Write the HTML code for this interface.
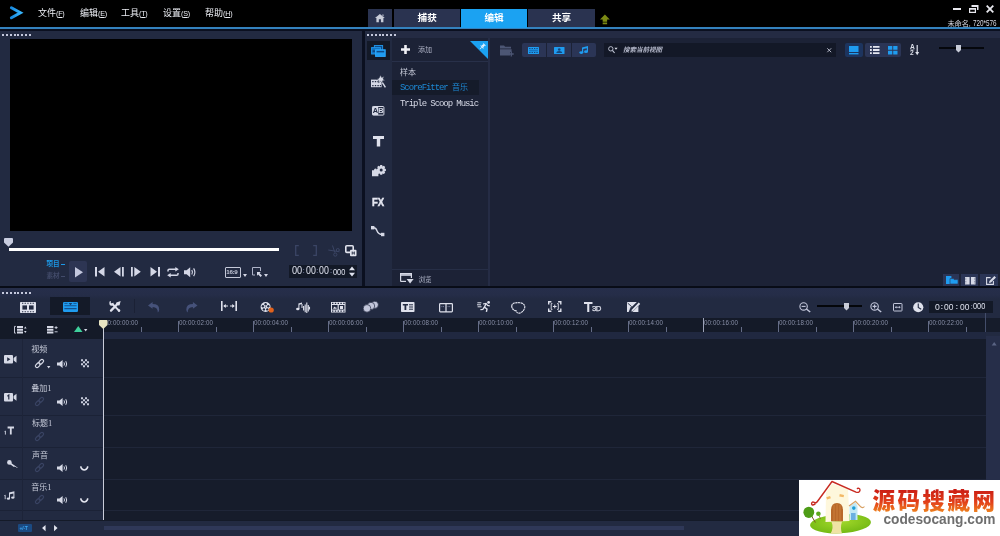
<!DOCTYPE html>
<html lang="zh-CN">
<head>
<meta charset="utf-8">
<title>VideoStudio</title>
<style>
html,body{margin:0;padding:0;background:#000;}
body{width:1000px;height:536px;position:relative;overflow:hidden;font-family:"Liberation Sans","Noto Sans CJK SC",sans-serif;color:#d0d4e4;}
.a{position:absolute;}
.t{position:absolute;white-space:nowrap;line-height:1;}
svg{position:absolute;overflow:visible;}
/* ---------- top bar ---------- */
#top{left:0;top:0;width:1000px;height:27px;background:#000;}
#bline{left:0;top:26.6px;width:1000px;height:2.4px;background:#3482be;}
#gap1{left:0;top:29px;width:1000px;height:1.5px;background:#0b1020;}
.menu{top:9.2px;font-size:9px;color:#eceef4;}
.menu small{font-size:7.2px;letter-spacing:-0.25px;position:relative;top:-0.6px}
.menu u{text-decoration-thickness:0.7px;text-underline-offset:1px}
.tab{top:9.3px;height:17.5px;background:#2a3350;color:#fff;font-size:9.6px;font-weight:bold;text-align:center;line-height:17.5px;}
/* ---------- panels ---------- */
#pv{left:0;top:30.5px;width:362.3px;height:255.5px;background:#222a41;}
#pvgap{left:362.3px;top:30.5px;width:2.7px;height:255.5px;background:#0b1020;}
#lib{left:365px;top:30.5px;width:635px;height:255.5px;background:linear-gradient(#242b43 0,#242b43 7.5px,#1c2236 7.5px);}
#libicons{left:365px;top:30.5px;width:27px;height:255.5px;background:#222a41;}
#liblist{left:392px;top:38px;width:96px;height:248px;background:#1c2236;}
#libdiv{left:488px;top:38px;width:1.5px;height:248px;background:#252c45;}
#hgap{left:0;top:285.8px;width:1000px;height:2.1px;background:#080c17;}
#tl{left:0;top:287.8px;width:1000px;height:248.2px;background:linear-gradient(#262e4a 0,#252d48 7px,#222a41 11px);}
.dots{height:2px;width:30px;background:repeating-linear-gradient(90deg,#c4c8dc 0,#c4c8dc 2px,transparent 2px,transparent 3.86px);}
.mono{font-family:"Liberation Mono","Noto Sans Mono CJK SC","Noto Sans CJK SC",monospace;}
#tc1 i,.tc i{font-style:normal;display:inline-block;width:3px;text-align:center}
.rl{font-size:7px;color:#878ea6;letter-spacing:0px;transform:scaleX(0.885);transform-origin:0 0}
.rl i{font-style:normal;display:inline-block;width:2.4px;text-align:center}
.th{font-size:8px;color:#c6cad8}
.dg{transform-origin:0 0}
</style>
</head>
<body>
<div id="root" style="position:absolute;left:0;top:0;width:1000px;height:536px;will-change:transform">
<!-- top bar -->
<div class="a" id="top"></div>
<div class="a" id="bline"></div>
<div class="a" id="gap1"></div>

<!-- panels -->
<div class="a" id="pv"></div>
<div class="a" id="pvgap"></div>
<div class="a" id="lib"></div>
<div class="a" id="libicons"></div>
<div class="a" id="liblist"></div>
<div class="a" id="libdiv"></div>
<div class="a" id="hgap"></div>
<div class="a" id="tl"></div>


<svg style="left:9px;top:5px" width="15" height="15" viewBox="0 0 15 15"><defs><linearGradient id="lg" x1="0" y1="0" x2="1" y2="0"><stop offset="0" stop-color="#188ae0"/><stop offset="1" stop-color="#36b4fc"/></linearGradient></defs><path d="M2.4 2.7 L11.4 7.7 L2.4 12.7" fill="none" stroke="url(#lg)" stroke-width="3" stroke-linejoin="miter" stroke-linecap="round"/></svg>
<div class="t menu" style="left:38px">文件<small>(<u>F</u>)</small></div>
<div class="t menu" style="left:80px">编辑<small>(<u>E</u>)</small></div>
<div class="t menu" style="left:121px">工具<small>(<u>T</u>)</small></div>
<div class="t menu" style="left:163px">设置<small>(<u>S</u>)</small></div>
<div class="t menu" style="left:205px">帮助<small>(<u>H</u>)</small></div>
<div class="a tab" style="left:367.5px;width:24.5px"></div>
<svg style="left:374.6px;top:14px" width="9.8" height="8.2" viewBox="0 0 12 10"><path d="M6 0 L12 5 L10.3 5 L10.3 10 L7.3 10 L7.3 6.5 L4.7 6.5 L4.7 10 L1.7 10 L1.7 5 L0 5 Z" fill="#c8ccd8"/><path d="M9 0.6 h1.4 v2.4 l-1.4 -1.2z" fill="#c8ccd8"/></svg>
<div class="a tab" style="left:394px;width:66.4px">捕获</div>
<div class="a tab" style="left:461px;width:66px;height:19.2px;background:#1ba2f2">编辑</div>
<div class="a tab" style="left:528.3px;width:66.5px">共享</div>
<svg style="left:600.3px;top:13.6px" width="9.8" height="10.8" viewBox="0 0 11 11"><path d="M5.5 0 L11 5.5 L8 5.5 L8 8 L3 8 L3 5.5 L0 5.5 Z M3 9 H8 V11 H3 Z" fill="#7c8a14"/></svg>
<!-- window controls -->
<div class="a" style="left:953px;top:8px;width:8px;height:2px;background:#e8e8ee"></div>
<svg style="left:969px;top:5px" width="10" height="8" viewBox="0 0 10 8"><path d="M2.5 0 H9.5 V5 H8 V2 H2.5 Z" fill="#e8e8ee"/><path d="M0 3 H7 V8 H0 Z M1.2 4.8 V6.8 H5.8 V4.8 Z" fill="#e8e8ee" fill-rule="evenodd"/></svg>
<svg style="left:986px;top:5px" width="8" height="8" viewBox="0 0 8 8"><path d="M0.7 0.7 L7.3 7.3 M7.3 0.7 L0.7 7.3" stroke="#e8e8ee" stroke-width="1.8"/></svg>
<div class="t" style="left:947.5px;top:19px;font-size:7.2px;color:#d8dae4;letter-spacing:-0.1px">未命名,<span style="display:inline-block;margin-left:2px;font-size:8.8px;letter-spacing:0;transform:scaleX(0.72);transform-origin:0 50%">720*576</span></div>


<div class="a dots" style="left:2px;top:33.5px"></div>
<div class="a" style="left:10px;top:39px;width:342px;height:192px;background:#000"></div>
<!-- scrubber -->
<svg style="left:4px;top:238px" width="9" height="9" viewBox="0 0 9 9"><path d="M1 0 H8 Q9 0 9 1 V4.5 L4.5 8.8 L0 4.5 V1 Q0 0 1 0 Z" fill="#c9cde0"/></svg>
<div class="a" style="left:9px;top:247.5px;width:269.5px;height:3px;background:#fff"></div>
<!-- project / clip -->
<div class="t" style="left:46.5px;top:261px;font-size:6.6px;color:#1c98e6;font-weight:bold">项目</div>
<div class="a" style="left:60.8px;top:264px;width:4.6px;height:1.3px;background:#1c98e6"></div>
<div class="t" style="left:46.5px;top:273px;font-size:6.6px;color:#424b6a;font-weight:bold">素材</div>
<div class="a" style="left:60.8px;top:276px;width:4.6px;height:1.3px;background:#424b6a"></div>
<div class="a" style="left:69px;top:261px;width:18px;height:20.5px;background:#2d3553;border-radius:2px"></div>
<svg style="left:74.5px;top:266.5px" width="8" height="10.5" viewBox="0 0 8 10.5"><path d="M0 0 L8 5.25 L0 10.5 Z" fill="#c4c8de"/></svg>
<!-- prev -->
<svg style="left:94.5px;top:267px" width="10" height="9.5" viewBox="0 0 10 9.5"><path d="M0 0 H2 V9.5 H0 Z M9.5 0 V9.5 L3 4.75 Z" fill="#d4d7e6"/></svg>
<!-- step back -->
<svg style="left:114px;top:267px" width="10" height="9.5" viewBox="0 0 10 9.5"><path d="M6.5 0 V9.5 L0 4.75 Z M8 0 H9.8 V9.5 H8 Z" fill="#d4d7e6"/></svg>
<!-- step fwd -->
<svg style="left:130.5px;top:267px" width="10" height="9.5" viewBox="0 0 10 9.5"><path d="M0 0 H1.8 V9.5 H0 Z M3.3 0 L9.8 4.75 L3.3 9.5 Z" fill="#d4d7e6"/></svg>
<!-- next -->
<svg style="left:149.5px;top:267px" width="10" height="9.5" viewBox="0 0 10 9.5"><path d="M0.5 0 L7 4.75 L0.5 9.5 Z M8 0 H10 V9.5 H8 Z" fill="#d4d7e6"/></svg>
<!-- loop -->
<svg style="left:166.5px;top:266.5px" width="12" height="10.5" viewBox="0 0 12 10.5"><path d="M1 4.6 V3.6 Q1 2.3 2.3 2.3 H9" fill="none" stroke="#d4d7e6" stroke-width="1.5"/><path d="M8.3 0 L11.8 2.3 L8.3 4.6 Z" fill="#d4d7e6"/><path d="M11 5.9 V6.9 Q11 8.2 9.7 8.2 H3" fill="none" stroke="#d4d7e6" stroke-width="1.5"/><path d="M3.7 5.9 L0.2 8.2 L3.7 10.5 Z" fill="#d4d7e6"/></svg>
<!-- volume -->
<svg style="left:184px;top:266.5px" width="13" height="10.5" viewBox="0 0 13 10.5"><path d="M0 3.3 H2.6 L6.2 0.3 V10.2 L2.6 7.2 H0 Z" fill="#d4d7e6"/><path d="M7.8 3 Q9.2 5.25 7.8 7.5 M9.6 1.3 Q12.2 5.25 9.6 9.2" fill="none" stroke="#d4d7e6" stroke-width="1.2"/></svg>
<!-- 16:9 -->
<div class="a" style="left:224.5px;top:267px;width:14.5px;height:8.5px;border:1px solid #c4c8d8;border-radius:1px"></div>
<div class="t" style="left:226.3px;top:269.2px;font-size:6.2px;font-weight:bold;color:#c4c8d8;letter-spacing:-0.35px">16:9</div>
<svg style="left:242.5px;top:273.5px" width="4" height="3" viewBox="0 0 4 3"><path d="M0 0 H4 L2 3 Z" fill="#d4d7e6"/></svg>
<!-- resize -->
<svg style="left:252px;top:267px" width="11" height="10.5" viewBox="0 0 11 10.5"><path d="M0.5 8 V0.5 H8.5 V4" fill="none" stroke="#aeb3c8" stroke-width="1"/><path d="M0.5 8 H3" fill="none" stroke="#aeb3c8" stroke-width="1"/><path d="M5 5 H8.8 L7.6 6.2 L10 8.6 L8.6 10 L6.2 7.6 L5 8.8 Z" fill="#d4d7e6"/></svg>
<svg style="left:264px;top:273.5px" width="4" height="3" viewBox="0 0 4 3"><path d="M0 0 H4 L2 3 Z" fill="#d4d7e6"/></svg>
<!-- mark in/out, cut, copy -->
<svg style="left:294.5px;top:245px" width="4" height="11" viewBox="0 0 4 11"><path d="M3.8 0.6 H0.7 V10.4 H3.8" fill="none" stroke="#3b4565" stroke-width="1.3"/></svg>
<svg style="left:313px;top:245px" width="4" height="11" viewBox="0 0 4 11"><path d="M0.2 0.6 H3.3 V10.4 H0.2" fill="none" stroke="#3b4565" stroke-width="1.3"/></svg>
<svg style="left:328px;top:244.5px" width="12" height="12" viewBox="0 0 12 12"><path d="M4.5 0.5 L6.8 7.5 M0.3 5 L11.5 6.8" fill="none" stroke="#3b4565" stroke-width="1"/><circle cx="7.3" cy="9.6" r="1.6" fill="none" stroke="#3b4565" stroke-width="1"/><circle cx="9.8" cy="5" r="1.5" fill="none" stroke="#3b4565" stroke-width="1"/></svg>
<svg style="left:345px;top:245px" width="12" height="11.5" viewBox="0 0 12 11.5"><rect x="0.8" y="0.8" width="7.4" height="6.6" rx="1" fill="none" stroke="#e2e4ee" stroke-width="1.6"/><rect x="5" y="4.8" width="6.5" height="6.4" rx="1" fill="#e2e4ee"/><path d="M7.2 6.5 V9.6 M9.3 6.5 V9.6 M7.2 8 H9.3" stroke="#222a41" stroke-width="0.9" fill="none"/></svg>
<!-- timecode -->
<div class="a" style="left:289px;top:264.5px;width:67.5px;height:13.5px;background:#131927"></div>
<div class="t dg" style="left:291.8px;top:264.2px;font-size:11.6px;color:#dfe2ee;transform:scaleX(0.791)">00</div>
<div class="t" style="left:302.3px;top:267.4px;font-size:8.0px;color:#59617e;font-weight:bold">:</div>
<div class="t dg" style="left:306.0px;top:264.2px;font-size:11.6px;color:#dfe2ee;transform:scaleX(0.760)">00</div>
<div class="t" style="left:316.0px;top:267.4px;font-size:8.0px;color:#59617e;font-weight:bold">:</div>
<div class="t dg" style="left:319.4px;top:264.2px;font-size:11.6px;color:#dfe2ee;transform:scaleX(0.760)">00</div>
<div class="t" style="left:329.7px;top:267.4px;font-size:8.0px;color:#59617e;font-weight:bold">:</div>
<div class="t dg" style="left:333.0px;top:266.6px;font-size:9.4px;color:#dfe2ee;transform:scaleX(0.791)">000</div>
<svg style="left:349px;top:266px" width="6" height="11" viewBox="0 0 6 11"><path d="M0 4.3 L3 0.5 L6 4.3 Z M0 6.7 L3 10.5 L6 6.7 Z" fill="#dfe2ee"/></svg>


<div class="a dots" style="left:367px;top:33.5px"></div>
<!-- left icon column -->
<div class="a" style="left:367px;top:41px;width:22.5px;height:18.5px;background:#131927"></div>
<svg style="left:370.5px;top:44.5px" width="15" height="12" viewBox="0 0 15 12"><rect x="3.4" y="0.5" width="8.2" height="5" fill="#0f4a86" stroke="#1f8fe0" stroke-width="1"/><rect x="0.6" y="2.6" width="8.8" height="6.4" fill="#1272c0" stroke="#1f96ea" stroke-width="1"/><rect x="1.6" y="5.4" width="2.4" height="1.4" fill="#0f3f74"/><rect x="4.6" y="4.8" width="9.6" height="6.6" fill="#1f9cf0" stroke="#2aa6fa" stroke-width="1"/><rect x="5.6" y="5.9" width="7.6" height="1.5" fill="#0f4a86"/></svg>
<!-- instant project -->
<svg style="left:371px;top:74.5px" width="15" height="13" viewBox="0 0 15 13"><rect x="0" y="4.6" width="10.6" height="7.6" fill="#d6d9e6"/><path d="M1.2 6 h1.4 v1.2 h-1.4z M3.8 6 h1.4 v1.2 h-1.4z M6.4 6 h1.4 v1.2 h-1.4z M1.2 10 h1.4 v1.2 h-1.4z M3.8 10 h1.4 v1.2 h-1.4z M6.4 10 h1.4 v1.2 h-1.4z M8.8 10 h1.2 v1.2 h-1.2z" fill="#222a41"/><path d="M9.6 0 L10.6 2.4 L13.2 1.6 L12 4 L14.2 5.4 L11.6 5.8 L11.6 8.2 L9.6 6.4 L7.4 7.8 L7.8 5.2 L5.4 4.2 L8 3.2 Z" fill="#d6d9e6" stroke="#222a41" stroke-width="0.5"/><path d="M11.4 7.6 L14.4 12.4" stroke="#d6d9e6" stroke-width="1.4"/></svg>
<!-- AB -->
<svg style="left:371.5px;top:105.5px" width="12.4" height="9.6" viewBox="0 0 12.4 9.6"><rect x="0.5" y="0.5" width="11.4" height="8.6" rx="0.8" fill="#222a41" stroke="#d6d9e6" stroke-width="1"/><rect x="0.5" y="0.5" width="5.7" height="8.6" fill="#d6d9e6"/><text x="3.35" y="7.4" text-anchor="middle" font-family="'Liberation Sans',sans-serif" font-weight="bold" font-size="7.4" fill="#222a41">A</text><text x="9" y="7.4" text-anchor="middle" font-family="'Liberation Sans',sans-serif" font-weight="bold" font-size="7.4" fill="#d6d9e6">B</text></svg>
<!-- T -->
<svg style="left:372.5px;top:136px" width="11" height="10.5" viewBox="0 0 11 10.5"><path d="M0 0 H11 V3 H7.2 V10.5 H3.8 V3 H0 Z" fill="#dfe1ec"/></svg>
<!-- graphic gear -->
<svg style="left:372px;top:165px" width="14" height="11.5" viewBox="0 0 14 11.5"><path d="M0 5.2 H2 Q2 3.6 3.4 3.6 Q4.8 3.6 4.8 5.2 H6.4 V11.3 H0 Z" fill="#d6d9e6"/><g transform="translate(9.2 4.9)"><path d="M-1 -4.8 H1 L1.3 -3.5 L2.6 -4.2 L4 -2.8 L3.3 -1.4 L4.7 -1 V1 L3.3 1.4 L4 2.8 L2.6 4.2 L1.3 3.5 L1 4.8 H-1 L-1.3 3.5 L-2.6 4.2 L-4 2.8 L-3.3 1.4 L-4.7 1 V-1 L-3.3 -1.4 L-4 -2.8 L-2.6 -4.2 L-1.3 -3.5 Z" fill="#d6d9e6"/><circle r="1.5" fill="#222a41"/></g></svg>
<!-- FX -->
<div class="t" style="left:371.5px;top:195.8px;font-size:11.6px;font-weight:bold;color:#e4e6f0;letter-spacing:0px;-webkit-text-stroke:0.5px #e4e6f0;transform:scaleX(0.82);transform-origin:0 0">FX</div>
<!-- path -->
<svg style="left:371.3px;top:225.5px" width="13.5" height="10.5" viewBox="0 0 13.5 10.5"><path d="M1.8 1.8 C8 0.6 3.4 8.6 11.6 8.4" fill="none" stroke="#d6d9e6" stroke-width="1.4"/><rect x="0" y="0" width="3.4" height="3.4" fill="#d6d9e6"/><rect x="10" y="6.8" width="3.4" height="3.4" fill="#d6d9e6"/></svg>
<!-- list column -->
<svg style="left:401px;top:45px" width="9" height="9" viewBox="0 0 9 9"><path d="M3.2 0 H5.8 V3.2 H9 V5.8 H5.8 V9 H3.2 V5.8 H0 V3.2 H3.2 Z" fill="#f0f1f6"/></svg>
<div class="t" style="left:418px;top:46px;font-size:7px;color:#aeb3c6">添加</div>
<svg style="left:470px;top:41px" width="18" height="18" viewBox="0 0 18 18"><path d="M0 0 H18 V18 Z" fill="#1ba2f2"/><g transform="translate(12.6 5.4) rotate(45) scale(0.72)"><rect x="-2.2" y="-4" width="4.4" height="1.4" fill="#e8f4ff"/><rect x="-1.5" y="-2.6" width="3" height="3" fill="#e8f4ff"/><rect x="-2.8" y="0.4" width="5.6" height="1.3" fill="#e8f4ff"/><rect x="-0.5" y="1.7" width="1" height="3.4" fill="#e8f4ff"/></g></svg>
<div class="a" style="left:392px;top:61px;width:96px;height:1px;background:#283049"></div>
<div class="t" style="left:400px;top:69px;font-size:8px;color:#c6cad8">样本</div>
<div class="a" style="left:392px;top:80px;width:87px;height:14.5px;background:#151b2a"></div>
<div class="t mono" style="left:400px;top:84px;font-size:9px;color:#1d8ad6;letter-spacing:-1.07px">ScoreFitter <span style="letter-spacing:0;font-size:8px">音乐</span></div>
<div class="t mono" style="left:400px;top:99.5px;font-size:9px;color:#d6d9e6;letter-spacing:-1.07px">Triple Scoop Music</div>
<!-- browse -->
<div class="a" style="left:392px;top:269px;width:96px;height:1px;background:#262e46"></div>
<svg style="left:400px;top:273px" width="14" height="11" viewBox="0 0 14 11"><path d="M0.6 8.4 V0.6 H11.4 V5" fill="none" stroke="#d6d9e6" stroke-width="1.2"/><path d="M0.6 2 H11.4" stroke="#d6d9e6" stroke-width="1.6"/><path d="M0.6 8.4 H6" stroke="#d6d9e6" stroke-width="1.2"/><path d="M6.6 6 H13.6 L10.1 10.6 Z" fill="#d6d9e6"/></svg>
<div class="t" style="left:418.5px;top:276.5px;font-size:6.5px;color:#aeb3c6">浏览</div>


<!-- folder add -->
<svg style="left:499.5px;top:45px" width="14" height="11.5" viewBox="0 0 14 11.5"><path d="M0 0.4 H4 L5.2 1.8 H11 V3.4 H0 Z" fill="#4c5674"/><path d="M0 4.2 H11.6 V7 H10 V10.4 H0 Z" fill="#4c5674"/><path d="M11.3 6.6 V11.4 M8.9 9 H13.7" stroke="#4c5674" stroke-width="1.3"/></svg>
<!-- media filter buttons -->
<div class="a" style="left:522px;top:42.5px;width:24px;height:14px;background:#2b3556;border-radius:2px 0 0 2px"></div>
<div class="a" style="left:547px;top:42.5px;width:24px;height:14px;background:#2b3556"></div>
<div class="a" style="left:572px;top:42.5px;width:24px;height:14px;background:#2b3556;border-radius:0 2px 2px 0"></div>
<svg style="left:528px;top:46.5px" width="11" height="7" viewBox="0 0 11 7"><rect width="11" height="7" rx="0.6" fill="#1f9cf0"/><path d="M1.2 1 h1.3 v0.9 h-1.3z M3.6 1 h1.3 v0.9 h-1.3z M6 1 h1.3 v0.9 h-1.3z M8.4 1 h1.3 v0.9 h-1.3z M1.2 5.1 h1.3 v0.9 h-1.3z M3.6 5.1 h1.3 v0.9 h-1.3z M6 5.1 h1.3 v0.9 h-1.3z M8.4 5.1 h1.3 v0.9 h-1.3z" fill="#16467c"/><rect x="1.2" y="2.7" width="8.6" height="1.7" fill="#1676c4"/></svg>
<svg style="left:553.5px;top:46.5px" width="10.5" height="7" viewBox="0 0 10.5 7"><rect width="10.5" height="7" rx="0.6" fill="#1f9cf0"/><circle cx="5.25" cy="2.5" r="1.3" fill="#16467c"/><path d="M2.3 6 Q2.3 4 5.25 4 Q8.2 4 8.2 6 Z" fill="#16467c"/></svg>
<svg style="left:579px;top:46px" width="9.5" height="8" viewBox="0 0 9.5 8"><path d="M3 1.4 L9 0 V5.8 H7.8 V2.2 L4.2 3 V6.8 H3 Z" fill="#1f9cf0"/><ellipse cx="2.3" cy="6.6" rx="2" ry="1.4" fill="#1f9cf0"/><ellipse cx="7" cy="5.7" rx="2" ry="1.4" fill="#1f9cf0"/></svg>
<!-- search -->
<div class="a" style="left:603.5px;top:42.5px;width:232.5px;height:14px;background:#131827"></div>
<svg style="left:608px;top:46px" width="10" height="7.5" viewBox="0 0 10 7.5"><circle cx="2.8" cy="2.8" r="2.2" fill="none" stroke="#c4c8d8" stroke-width="0.9"/><path d="M4.4 4.4 L6.6 7" stroke="#c4c8d8" stroke-width="1.1"/><path d="M6.4 1.8 H9.6 L8 3.8 Z" fill="#e0e2ec"/></svg>
<div class="t" style="left:623px;top:46.5px;font-size:6.5px;font-style:italic;font-weight:bold;color:#b4b8ca">搜索当前视图</div>
<svg style="left:827px;top:47.5px" width="4.5" height="4.5" viewBox="0 0 4.5 4.5"><path d="M0.3 0.3 L4.2 4.2 M4.2 0.3 L0.3 4.2" stroke="#c4c8d8" stroke-width="0.9"/></svg>
<!-- view buttons -->
<div class="a" style="left:844.5px;top:42.5px;width:18px;height:14px;background:#1d345e;border-radius:2px"></div>
<div class="a" style="left:865px;top:42.5px;width:17.5px;height:14px;background:#2b3556;border-radius:2px 0 0 2px"></div>
<div class="a" style="left:883px;top:42.5px;width:18px;height:14px;background:#2b3556;border-radius:0 2px 2px 0"></div>
<svg style="left:849px;top:45.5px" width="9.5" height="8.5" viewBox="0 0 9.5 8.5"><rect width="9.5" height="6" fill="#1f9cf0"/><rect y="7" width="9.5" height="1.4" fill="#1f9cf0"/></svg>
<svg style="left:869.5px;top:46px" width="9.5" height="8" viewBox="0 0 9.5 8"><path d="M0 0 h1.8 v1.8 h-1.8z M0 3.1 h1.8 v1.8 h-1.8z M0 6.2 h1.8 v1.8 h-1.8z M3 0 h6.5 v1.8 h-6.5z M3 3.1 h6.5 v1.8 h-6.5z M3 6.2 h6.5 v1.8 h-6.5z" fill="#e4e6f0"/></svg>
<svg style="left:887.5px;top:45.5px" width="9.5" height="8.5" viewBox="0 0 9.5 8.5"><path d="M0 0 h4.3 v3.8 h-4.3z M5.2 0 h4.3 v3.8 h-4.3z M0 4.7 h4.3 v3.8 h-4.3z M5.2 4.7 h4.3 v3.8 h-4.3z" fill="#1f9cf0"/></svg>
<!-- sort -->
<div class="t" style="left:910px;top:44.4px;font-size:6.6px;font-weight:bold;color:#dcdfea;line-height:5.4px">A<br>2</div>
<svg style="left:910px;top:45px" width="9.5" height="10.5" viewBox="0 0 9.5 10.5"><path d="M0.2 4.9 H4.4" stroke="#dcdfea" stroke-width="0.6"/><path d="M7.2 0 V8" stroke="#dcdfea" stroke-width="1.2"/><path d="M5.2 7 H9.2 L7.2 10.3 Z" fill="#dcdfea"/></svg>
<!-- size slider -->
<div class="a" style="left:938.5px;top:47.2px;width:45.5px;height:2px;background:#05070c"></div>
<svg style="left:956px;top:44.5px" width="5" height="7.5" viewBox="0 0 5 7.5"><path d="M0 0 H5 V5 L2.5 7.5 L0 5 Z" fill="#c8ccd8"/></svg>
<!-- bottom-right panel buttons -->
<div class="a" style="left:942.5px;top:273.5px;width:16px;height:12.5px;background:#2b3556"></div>
<div class="a" style="left:961px;top:273.5px;width:16.5px;height:12.5px;background:#2b3556"></div>
<div class="a" style="left:980px;top:273.5px;width:18px;height:12.5px;background:#2b3556"></div>
<svg style="left:945.5px;top:276px" width="12" height="8" viewBox="0 0 12 8"><path d="M0 0 H5.4 V8 H0 Z" fill="#1f9cf0"/><path d="M4 2.6 H7.4 L8.2 3.6 H12 V8 H4 Z" fill="#1f9cf0" stroke="#2b3556" stroke-width="0.6"/></svg>
<svg style="left:964.5px;top:276.5px" width="10.5" height="7.5" viewBox="0 0 10.5 7.5"><path d="M0 0 H4.6 V7.5 H0 Z M5.9 0 H10.5 V7.5 H5.9 Z" fill="#d6d9e6"/><path d="M0.8 0.8 V6.7 M9.7 0.8 V6.7" stroke="#2b3556" stroke-width="0.6" stroke-dasharray="0.8 0.8"/></svg>
<svg style="left:985.5px;top:275.5px" width="10" height="9" viewBox="0 0 10 9"><path d="M4.6 1.6 H0.6 V8.4 H7.4 V5" fill="none" stroke="#d6d9e6" stroke-width="1.1"/><path d="M8.4 0 L10 1.6 L5 6.6 L3 7 L3.4 5 Z" fill="#d6d9e6"/></svg>

<div class="a dots" style="left:2px;top:292px"></div>
<svg style="left:19.5px;top:301.5px" width="16" height="11" viewBox="0 0 16 11"><rect width="16" height="11" rx="0.8" fill="#dfe1ec"/><rect x="2.4" y="3.4" width="4.6" height="4.2" fill="#222a41"/><rect x="9" y="3.4" width="4.6" height="4.2" fill="#222a41"/><path d="M2 0.7 h1.3 v1 h-1.3z M4.6 0.7 h1.3 v1 h-1.3z M7.3 0.7 h1.3 v1 h-1.3z M10 0.7 h1.3 v1 h-1.3z M12.6 0.7 h1.3 v1 h-1.3z M2 9.3 h1.3 v1 h-1.3z M4.6 9.3 h1.3 v1 h-1.3z M7.3 9.3 h1.3 v1 h-1.3z M10 9.3 h1.3 v1 h-1.3z M12.6 9.3 h1.3 v1 h-1.3z" fill="#222a41"/></svg>
<div class="a" style="left:49.5px;top:297px;width:40.5px;height:18px;background:#141a28"></div>
<svg style="left:62.5px;top:301.5px" width="15" height="10" viewBox="0 0 15 10"><rect width="15" height="10" rx="1.2" fill="#1f9cf0"/><path d="M1.4 3.8 H13.6 M1.4 6.6 H13.6" stroke="#14508c" stroke-width="1.1"/><path d="M5.6 1 H9.4 L7.5 3.2 Z" fill="#123e70"/><path d="M1.4 1.4 H4.6 M10.4 1.4 H13.6" stroke="#14508c" stroke-width="0.9"/></svg>
<svg style="left:109px;top:300.5px" width="12" height="11" viewBox="0 0 12 11"><path d="M2 9.6 L8.4 3" stroke="#dfe1ec" stroke-width="2.3" stroke-linecap="round"/><path d="M7.4 1.4 L11.6 0 L10.6 4.2 L9 4.6 L7 2.6 Z" fill="#dfe1ec"/><path d="M3.4 3 L10 9.6" stroke="#dfe1ec" stroke-width="2" stroke-linecap="round"/><path d="M0.3 2 Q0 0.2 2 0 L1.7 1.7 L3 2.8 L4.3 1.6 Q5 3.6 3.6 4.6 Q1.8 5.2 0.7 4 Z" fill="#dfe1ec"/><circle cx="10" cy="9.6" r="1.3" fill="#dfe1ec"/></svg>
<div class="a" style="left:134px;top:299px;width:1px;height:14px;background:#1b2135"></div>
<svg style="left:148px;top:301.5px" width="11.5" height="10.5" viewBox="0 0 11.5 10.5"><path d="M0 3.4 L4.6 0 V2 Q11.2 2 11.2 7.4 Q11.2 9.4 9.8 10.5 Q10 5.2 4.6 5 V6.8 Z" fill="#46527a"/></svg>
<svg style="left:186px;top:301.5px" width="11.5" height="10.5" viewBox="0 0 11.5 10.5"><path d="M11.5 3.4 L6.9 0 V2 Q0.3 2 0.3 7.4 Q0.3 9.4 1.7 10.5 Q1.5 5.2 6.9 5 V6.8 Z" fill="#46527a"/></svg>
<svg style="left:220.5px;top:301px" width="16" height="10" viewBox="0 0 16 10"><path d="M0.8 0 V10 M15.2 0 V10" stroke="#dfe1ec" stroke-width="1.6"/><path d="M3 5 H7 M9 5 H13" stroke="#dfe1ec" stroke-width="1.1"/><path d="M2.2 5 L4.8 3 V7 Z M13.8 5 L11.2 3 V7 Z" fill="#dfe1ec"/></svg>
<svg style="left:259.5px;top:301.5px" width="14" height="11" viewBox="0 0 14 11"><circle cx="5.6" cy="5" r="5" fill="#dfe1ec"/><circle cx="5.6" cy="2.2" r="1.2" fill="#222a41"/><circle cx="2.9" cy="4.2" r="1.2" fill="#222a41"/><circle cx="8.3" cy="4.2" r="1.2" fill="#222a41"/><circle cx="3.9" cy="7.4" r="1.2" fill="#222a41"/><circle cx="7.3" cy="7.4" r="1.2" fill="#222a41"/><circle cx="5.6" cy="5" r="0.6" fill="#222a41"/><circle cx="11.2" cy="8" r="2.6" fill="#e2621c"/></svg>
<svg style="left:296px;top:301.5px" width="14" height="11" viewBox="0 0 14 11"><path d="M2.4 1.4 L6 0.4 V2 L3.4 2.8 V7 H2.4 Z" fill="#dfe1ec"/><ellipse cx="1.8" cy="7" rx="1.7" ry="1.3" fill="#dfe1ec"/><path d="M6 2 V6" stroke="#dfe1ec" stroke-width="1"/><path d="M7.6 4 V8.6 M9.2 2.4 V10.2 M10.8 0.4 V11 M12.3 3 V9.4 M13.5 4.8 V7.4" stroke="#dfe1ec" stroke-width="1.1"/></svg>
<svg style="left:330.5px;top:301.5px" width="14.5" height="10.5" viewBox="0 0 14.5 10.5"><rect width="14.5" height="10.5" fill="#dfe1ec"/><path d="M1 0.8 h1.4 v1.2 h-1.4z M3.8 0.8 h1.4 v1.2 h-1.4z M6.6 0.8 h1.4 v1.2 h-1.4z M9.4 0.8 h1.4 v1.2 h-1.4z M12.2 0.8 h1.4 v1.2 h-1.4z M1 8.5 h1.4 v1.2 h-1.4z M3.8 8.5 h1.4 v1.2 h-1.4z M6.6 8.5 h1.4 v1.2 h-1.4z M9.4 8.5 h1.4 v1.2 h-1.4z M12.2 8.5 h1.4 v1.2 h-1.4z" fill="#222a41"/><rect x="1" y="3" width="5.6" height="4.6" fill="#222a41"/><rect x="7.8" y="3" width="5.6" height="4.6" fill="#222a41"/><path d="M2 6.8 L3.4 4.4 L4.4 5.8 L5 5 L5.8 6.8 Z M9 4 h3 v3 h-3z" fill="#dfe1ec"/></svg>
<svg style="left:362.5px;top:301px" width="16" height="11.5" viewBox="0 0 16 11.5"><circle cx="11.8" cy="3.8" r="3.6" fill="#c2c6da" stroke="#222a41" stroke-width="0.7"/><circle cx="8" cy="5" r="3.7" fill="#c2c6da" stroke="#222a41" stroke-width="0.7"/><circle cx="4" cy="7.4" r="3.8" fill="#c2c6da" stroke="#222a41" stroke-width="0.7"/></svg>
<svg style="left:400.5px;top:302px" width="13.5" height="10" viewBox="0 0 13.5 10"><rect width="13.5" height="10" rx="0.8" fill="#dfe1ec"/><path d="M1.8 2 H7 V3.6 H5.3 V8 H3.5 V3.6 H1.8 Z" fill="#222a41"/><path d="M8 2.8 H12 M8 5 H12 M8 7.2 H12" stroke="#222a41" stroke-width="1"/></svg>
<svg style="left:438.5px;top:302.5px" width="14" height="9.5" viewBox="0 0 14 9.5"><rect x="0.6" y="0.6" width="12.8" height="8.3" rx="0.8" fill="none" stroke="#dfe1ec" stroke-width="1.2"/><path d="M7 0.6 V8.9" stroke="#dfe1ec" stroke-width="1.2"/><path d="M2.4 3.6 H5.4 M8.6 3.6 H11.6" stroke="#7d85a0" stroke-width="0.9" stroke-dasharray="1 0.6"/></svg>
<svg style="left:476.5px;top:301px" width="14.5" height="11" viewBox="0 0 14.5 11"><circle cx="11.6" cy="1.4" r="1.4" fill="#dfe1ec"/><path d="M6 3 L9 2.4 L10.6 4.4 L12.8 4.8" fill="none" stroke="#dfe1ec" stroke-width="1.2"/><path d="M9 2.8 L7.4 6.2 L10 8 L9.4 10.8" fill="none" stroke="#dfe1ec" stroke-width="1.4"/><path d="M7.4 6.2 L5.8 8.4 L3.4 8.6" fill="none" stroke="#dfe1ec" stroke-width="1.3"/><path d="M0.4 1.8 H4.4 M0 3.8 H4 M0.6 5.8 H4.6" stroke="#dfe1ec" stroke-width="1"/></svg>
<svg style="left:511px;top:301.5px" width="14.5" height="12" viewBox="511 301.5 14.5 12"><path d="M511.7 305.8 Q512 302.6 515.6 302.3 Q519 301.6 522.2 302.8 Q525.4 304.2 524.6 307.6 Q523.4 311.4 519.6 312.6 Q516.8 313 516.2 310.4 Q512.4 309.8 511.7 305.8 Z" fill="none" stroke="#dfe1ec" stroke-width="1.2" stroke-dasharray="2.2 0.5"/></svg>
<svg style="left:548px;top:301px" width="13.5" height="11" viewBox="0 0 13.5 11"><path d="M3.4 0.7 H0.7 V3.6 M0.7 7.4 V10.3 H3.4 M10.1 0.7 H12.8 V3.6 M12.8 7.4 V10.3 H10.1" fill="none" stroke="#dfe1ec" stroke-width="1.4"/><path d="M4.4 2.6 H3.2 V8.4 H4.4 M9.1 2.6 H10.3 V8.4 H9.1" fill="none" stroke="#dfe1ec" stroke-width="0.9"/><path d="M6.75 3.6 V7.4 M4.9 5.5 H8.6" stroke="#dfe1ec" stroke-width="1"/></svg>
<svg style="left:584px;top:302px" width="8.5" height="10" viewBox="0 0 8.5 10"><path d="M0 0 H8.5 V2 H5.3 V10 H3.2 V2 H0 Z" fill="#dfe1ec"/></svg>
<div class="t" style="left:592px;top:305.3px;font-size:7.8px;color:#dfe1ec;letter-spacing:-0.5px;-webkit-text-stroke:0.25px #dfe1ec">3D</div>
<svg style="left:626.5px;top:302px" width="14" height="10.5" viewBox="0 0 14 10.5"><path d="M0 0 H11.4 V2.2 L5.6 8 L3.4 8.4 L3.8 6.2 L8 2 H0 Z" fill="#dfe1ec"/><path d="M0 0 H11.4 V10 H0 Z" fill="#dfe1ec"/><path d="M0.6 1 L4.6 4.6 L3.4 6.4" fill="none" stroke="#222a41" stroke-width="0.9"/><path d="M12.6 1.2 L5.2 8.6 L3.2 9.4 L4 7.4 L11.4 0" fill="none" stroke="#222a41" stroke-width="2.4"/><path d="M13.2 2 L6.4 8.8 L4.2 9.6 L5 7.4 L11.8 0.6 Z" fill="#dfe1ec"/></svg>
<svg style="left:798.5px;top:301.5px" width="12" height="10.5" viewBox="0 0 12 10.5"><circle cx="4.6" cy="4.4" r="3.7" fill="none" stroke="#c2c6da" stroke-width="1.1"/><path d="M2.6 4.4 H6.6" stroke="#c2c6da" stroke-width="1.1"/><path d="M7.4 7 L11.2 10" stroke="#c2c6da" stroke-width="1.5"/></svg>
<div class="a" style="left:817px;top:305px;width:44.5px;height:2px;background:#04060a"></div>
<svg style="left:844px;top:302.5px" width="5" height="7.5" viewBox="0 0 5 7.5"><path d="M0 0 H5 V5 L2.5 7.5 L0 5 Z" fill="#c8ccd8"/></svg>
<svg style="left:869.5px;top:301.5px" width="12" height="10.5" viewBox="0 0 12 10.5"><circle cx="4.6" cy="4.4" r="3.7" fill="none" stroke="#c2c6da" stroke-width="1.1"/><path d="M2.6 4.4 H6.6 M4.6 2.4 V6.4" stroke="#c2c6da" stroke-width="1.1"/><path d="M7.4 7 L11.2 10" stroke="#c2c6da" stroke-width="1.5"/></svg>
<svg style="left:892.5px;top:302.5px" width="9.5" height="8.5" viewBox="0 0 9.5 8.5"><rect x="0.5" y="0.5" width="8.5" height="7.5" rx="0.6" fill="none" stroke="#c2c6da" stroke-width="1"/><path d="M2.6 4.25 H6.9" stroke="#c2c6da" stroke-width="0.9"/><path d="M1.8 4.25 L3.4 3 V5.5 Z M7.7 4.25 L6.1 3 V5.5 Z" fill="#c2c6da"/></svg>
<svg style="left:913px;top:301.5px" width="10.5" height="10.5" viewBox="0 0 10.5 10.5"><circle cx="5.25" cy="5.25" r="5.1" fill="#dfe1ec"/><path d="M5.25 1.4 V5.4 L8.2 7.2" fill="none" stroke="#222a41" stroke-width="1.1"/></svg>
<div class="a" style="left:929px;top:300.5px;width:64px;height:12px;background:#131927"></div>
<div class="t dg" style="left:934.6px;top:301.6px;font-size:9.4px;color:#dfe2ee;transform:scaleX(0.92)">0</div>
<div class="t" style="left:940.4px;top:302.6px;font-size:8.0px;color:#c4c8d8;font-weight:bold">:</div>
<div class="t dg" style="left:944.4px;top:301.6px;font-size:9.4px;color:#dfe2ee;transform:scaleX(0.9)">00</div>
<div class="t" style="left:955.6px;top:302.6px;font-size:8.0px;color:#c4c8d8;font-weight:bold">:</div>
<div class="t dg" style="left:959.6px;top:301.6px;font-size:9.4px;color:#dfe2ee;transform:scaleX(0.9)">00</div>
<div class="t" style="left:970.6px;top:303.0px;font-size:7.0px;color:#6a7290;font-weight:bold">:</div>
<div class="t dg" style="left:973.2px;top:302.8px;font-size:8.2px;color:#dfe2ee;transform:scaleX(0.9)">000</div>
<div class="a" style="left:0;top:318px;width:986px;height:20.5px;background:#141a28"></div>
<div class="a" style="left:986px;top:318px;width:14px;height:13.5px;background:#161c2b"></div>
<div class="a" style="left:985px;top:313px;width:1px;height:22px;background:#434d6a"></div>
<div class="a" style="left:104px;top:331.5px;width:882px;height:7px;background:#202840"></div>
<svg style="left:13.5px;top:325.5px" width="13" height="7.5" viewBox="0 0 13 7.5"><path d="M1.8 0.4 H0.5 V7.1 H1.8" fill="none" stroke="#d6d9e6" stroke-width="0.9"/><path d="M3 0 h6 v2 h-6z M3 2.75 h6 v2 h-6z M3 5.5 h6 v2 h-6z" fill="#d6d9e6"/><path d="M10 2.4 L11.3 0.6 L12.6 2.4 Z M10 5.1 L11.3 6.9 L12.6 5.1 Z" fill="#d6d9e6"/></svg>
<svg style="left:47px;top:325.5px" width="11" height="7.5" viewBox="0 0 11 7.5"><path d="M0 0 h6.4 v2 h-6.4z M0 2.75 h6.4 v2 h-6.4z M0 5.5 h6.4 v2 h-6.4z" fill="#d6d9e6"/><path d="M7.6 1.6 H10.6 M9.1 0.2 V3 M7.6 5.8 H10.6" stroke="#d6d9e6" stroke-width="0.9"/></svg>
<svg style="left:73.5px;top:325.5px" width="8.5" height="6" viewBox="0 0 8.5 6"><path d="M4.25 0 L8.5 6 H0 Z" fill="#3fd09c"/></svg>
<svg style="left:83.5px;top:329px" width="3.4" height="2.4" viewBox="0 0 3.4 2.4"><path d="M0 0 H3.4 L1.7 2.4 Z" fill="#d6d9e6"/></svg>
<div class="a" style="left:140.5px;top:326.5px;width:1px;height:5px;background:#656d88"></div>
<div class="t rl" style="left:104.2px;top:318.8px">00<i>:</i>00<i>:</i>00<i>:</i>00</div>
<div class="a" style="left:178px;top:321px;width:1px;height:10.5px;background:#656d88"></div>
<div class="a" style="left:215.5px;top:326.5px;width:1px;height:5px;background:#656d88"></div>
<div class="t rl" style="left:179.2px;top:318.8px">00<i>:</i>00<i>:</i>02<i>:</i>00</div>
<div class="a" style="left:253px;top:321px;width:1px;height:10.5px;background:#656d88"></div>
<div class="a" style="left:290.5px;top:326.5px;width:1px;height:5px;background:#656d88"></div>
<div class="t rl" style="left:254.2px;top:318.8px">00<i>:</i>00<i>:</i>04<i>:</i>00</div>
<div class="a" style="left:328px;top:321px;width:1px;height:10.5px;background:#656d88"></div>
<div class="a" style="left:365.5px;top:326.5px;width:1px;height:5px;background:#656d88"></div>
<div class="t rl" style="left:329.2px;top:318.8px">00<i>:</i>00<i>:</i>06<i>:</i>00</div>
<div class="a" style="left:403px;top:321px;width:1px;height:10.5px;background:#656d88"></div>
<div class="a" style="left:440.5px;top:326.5px;width:1px;height:5px;background:#656d88"></div>
<div class="t rl" style="left:404.2px;top:318.8px">00<i>:</i>00<i>:</i>08<i>:</i>00</div>
<div class="a" style="left:478px;top:321px;width:1px;height:10.5px;background:#656d88"></div>
<div class="a" style="left:515.5px;top:326.5px;width:1px;height:5px;background:#656d88"></div>
<div class="t rl" style="left:479.2px;top:318.8px">00<i>:</i>00<i>:</i>10<i>:</i>00</div>
<div class="a" style="left:553px;top:321px;width:1px;height:10.5px;background:#656d88"></div>
<div class="a" style="left:590.5px;top:326.5px;width:1px;height:5px;background:#656d88"></div>
<div class="t rl" style="left:554.2px;top:318.8px">00<i>:</i>00<i>:</i>12<i>:</i>00</div>
<div class="a" style="left:628px;top:321px;width:1px;height:10.5px;background:#656d88"></div>
<div class="a" style="left:665.5px;top:326.5px;width:1px;height:5px;background:#656d88"></div>
<div class="t rl" style="left:629.2px;top:318.8px">00<i>:</i>00<i>:</i>14<i>:</i>00</div>
<div class="a" style="left:703px;top:321px;width:1px;height:10.5px;background:#656d88"></div>
<div class="a" style="left:740.5px;top:326.5px;width:1px;height:5px;background:#656d88"></div>
<div class="t rl" style="left:704.2px;top:318.8px">00<i>:</i>00<i>:</i>16<i>:</i>00</div>
<div class="a" style="left:778px;top:321px;width:1px;height:10.5px;background:#656d88"></div>
<div class="a" style="left:815.5px;top:326.5px;width:1px;height:5px;background:#656d88"></div>
<div class="t rl" style="left:779.2px;top:318.8px">00<i>:</i>00<i>:</i>18<i>:</i>00</div>
<div class="a" style="left:853px;top:321px;width:1px;height:10.5px;background:#656d88"></div>
<div class="a" style="left:890.5px;top:326.5px;width:1px;height:5px;background:#656d88"></div>
<div class="t rl" style="left:854.2px;top:318.8px">00<i>:</i>00<i>:</i>20<i>:</i>00</div>
<div class="a" style="left:928px;top:321px;width:1px;height:10.5px;background:#656d88"></div>
<div class="a" style="left:965.5px;top:326.5px;width:1px;height:5px;background:#656d88"></div>
<div class="t rl" style="left:929.2px;top:318.8px">00<i>:</i>00<i>:</i>22<i>:</i>00</div>
<div class="a" style="left:703px;top:317.5px;width:1px;height:14px;background:#9ca2b8"></div>
<div class="a" style="left:104px;top:338.5px;width:882px;height:181.5px;background:#161c2b"></div>
<div class="a" style="left:104px;top:376.5px;width:882px;height:1px;background:#1f2639"></div>
<div class="a" style="left:0px;top:376.5px;width:103px;height:1px;background:#1b2236"></div>
<div class="a" style="left:104px;top:414.5px;width:882px;height:1px;background:#1f2639"></div>
<div class="a" style="left:0px;top:414.5px;width:103px;height:1px;background:#1b2236"></div>
<div class="a" style="left:104px;top:446.5px;width:882px;height:1px;background:#1f2639"></div>
<div class="a" style="left:0px;top:446.5px;width:103px;height:1px;background:#1b2236"></div>
<div class="a" style="left:104px;top:478.5px;width:882px;height:1px;background:#1f2639"></div>
<div class="a" style="left:0px;top:478.5px;width:103px;height:1px;background:#1b2236"></div>
<div class="a" style="left:104px;top:510.0px;width:882px;height:1px;background:#1f2639"></div>
<div class="a" style="left:0px;top:510.0px;width:103px;height:1px;background:#1b2236"></div>
<div class="a" style="left:22px;top:338.5px;width:1px;height:181.5px;background:#1d2439"></div>
<div class="a" style="left:986px;top:335.5px;width:14px;height:144px;background:#262e49"></div>
<svg style="left:991px;top:341.7px" width="6.4" height="3.4" viewBox="0 0 5 3.4"><path d="M2.5 0 L5 3.4 H0 Z" fill="#5a6484"/></svg>
<div class="a" style="left:103px;top:328px;width:1px;height:192px;background:#c9ccd9"></div>
<svg style="left:99px;top:319.5px" width="8.5" height="9" viewBox="0 0 8.5 9"><path d="M0.8 0 H7.7 Q8.5 0 8.5 0.8 V5 L4.25 9 L0 5 V0.8 Q0 0 0.8 0 Z" fill="#e8e4c2"/></svg>
<div class="t th" style="left:31.3px;top:346px">视频</div>
<svg style="left:4px;top:354.5px" width="12.5" height="8.5" viewBox="0 0 12.5 8.5"><rect width="9" height="8.5" rx="1" fill="#d6d9e6"/><path d="M9.6 3 L12.5 0.8 V7.7 L9.6 5.5 Z" fill="#d6d9e6"/><path d="M3.2 2.2 L6.4 4.25 L3.2 6.3 Z" fill="#222a41"/></svg>
<svg style="left:34.5px;top:358.5px" width="9" height="9" viewBox="0 0 9 9"><g transform="rotate(-45 4.5 4.5)" fill="none" stroke="#d6d9e6" stroke-width="1.2"><rect x="-0.6" y="2.9" width="5.4" height="3.2" rx="1.6"/><rect x="4.2" y="2.9" width="5.4" height="3.2" rx="1.6"/></g></svg>
<svg style="left:46.5px;top:366px" width="3.4" height="2.4" viewBox="0 0 3.4 2.4"><path d="M0 0 H3.4 L1.7 2.4 Z" fill="#d6d9e6"/></svg>
<svg style="left:57.0px;top:359.5px" width="11.5" height="8" viewBox="0 0 11.5 8"><path d="M0 2.4 H2.4 L5.6 0 V8 L2.4 5.6 H0 Z" fill="#d6d9e6"/><path d="M7 2.4 Q8 4 7 5.6 M8.8 1.2 Q10.6 4 8.8 6.8" fill="none" stroke="#d6d9e6" stroke-width="1"/></svg>
<svg style="left:80.5px;top:359.0px" width="8" height="8.5" viewBox="0 0 8 8"><path d="M0 0 h2 v2 h-2z M4 0 h2 v2 h-2z M2 2 h2 v2 h-2z M6 2 h2 v2 h-2z M0 4 h2 v2 h-2z M4 4 h2 v2 h-2z M2 6 h2 v2 h-2z M6 6 h2 v2 h-2z" fill="#c8ccdc"/></svg>
<div class="t th" style="left:31.3px;top:384px">叠加<span style="font-family:'Liberation Serif',serif;font-size:8.5px">1</span></div>
<svg style="left:4px;top:392.5px" width="12.5" height="8.5" viewBox="0 0 12.5 8.5"><rect width="9" height="8.5" rx="1" fill="#d6d9e6"/><path d="M9.6 3 L12.5 0.8 V7.7 L9.6 5.5 Z" fill="#d6d9e6"/><path d="M3.4 3.2 L4.8 2 V6.6" fill="none" stroke="#222a41" stroke-width="1.2"/></svg>
<svg style="left:34.5px;top:396.5px" width="9" height="9" viewBox="0 0 9 9"><g transform="rotate(-45 4.5 4.5)" fill="none" stroke="#3a4464" stroke-width="1.2"><rect x="-0.6" y="2.9" width="5.4" height="3.2" rx="1.6"/><rect x="4.2" y="2.9" width="5.4" height="3.2" rx="1.6"/></g></svg>
<svg style="left:57.0px;top:397.5px" width="11.5" height="8" viewBox="0 0 11.5 8"><path d="M0 2.4 H2.4 L5.6 0 V8 L2.4 5.6 H0 Z" fill="#d6d9e6"/><path d="M7 2.4 Q8 4 7 5.6 M8.8 1.2 Q10.6 4 8.8 6.8" fill="none" stroke="#d6d9e6" stroke-width="1"/></svg>
<svg style="left:80.5px;top:397.0px" width="8" height="8.5" viewBox="0 0 8 8"><path d="M0 0 h2 v2 h-2z M4 0 h2 v2 h-2z M2 2 h2 v2 h-2z M6 2 h2 v2 h-2z M0 4 h2 v2 h-2z M4 4 h2 v2 h-2z M2 6 h2 v2 h-2z M6 6 h2 v2 h-2z" fill="#c8ccdc"/></svg>
<div class="t th" style="left:32px;top:419px">标题<span style="font-family:'Liberation Serif',serif;font-size:8.5px">1</span></div>
<svg style="left:3.5px;top:426px" width="10" height="9" viewBox="0 0 10 9"><path d="M3.6 0.6 H10 V2.4 H7.7 V8.6 H5.9 V2.4 H3.6 Z" fill="#d6d9e6"/><path d="M0.6 5.4 L1.4 5 V8.6" fill="none" stroke="#d6d9e6" stroke-width="0.9"/></svg>
<svg style="left:34.5px;top:431.5px" width="9" height="9" viewBox="0 0 9 9"><g transform="rotate(-45 4.5 4.5)" fill="none" stroke="#3a4464" stroke-width="1.2"><rect x="-0.6" y="2.9" width="5.4" height="3.2" rx="1.6"/><rect x="4.2" y="2.9" width="5.4" height="3.2" rx="1.6"/></g></svg>
<div class="t th" style="left:32px;top:451.5px">声音</div>
<svg style="left:6.5px;top:459.5px" width="10.5" height="8.5" viewBox="0 0 10.5 8.5"><circle cx="2.4" cy="2.4" r="2.3" fill="#d6d9e6"/><path d="M3.6 3.6 L7.4 6.4" stroke="#d6d9e6" stroke-width="1.8"/><path d="M7 6.2 Q9.4 6 10.3 8" fill="none" stroke="#d6d9e6" stroke-width="0.8"/></svg>
<svg style="left:34.5px;top:463.0px" width="9" height="9" viewBox="0 0 9 9"><g transform="rotate(-45 4.5 4.5)" fill="none" stroke="#3a4464" stroke-width="1.2"><rect x="-0.6" y="2.9" width="5.4" height="3.2" rx="1.6"/><rect x="4.2" y="2.9" width="5.4" height="3.2" rx="1.6"/></g></svg>
<svg style="left:57.0px;top:464.0px" width="11.5" height="8" viewBox="0 0 11.5 8"><path d="M0 2.4 H2.4 L5.6 0 V8 L2.4 5.6 H0 Z" fill="#d6d9e6"/><path d="M7 2.4 Q8 4 7 5.6 M8.8 1.2 Q10.6 4 8.8 6.8" fill="none" stroke="#d6d9e6" stroke-width="1"/></svg>
<svg style="left:80.2px;top:466.2px" width="8.5" height="5" viewBox="0 0 8.5 5"><path d="M0.9 0.3 V1.4 Q2 4 4.25 4 Q6.5 4 7.6 1.4 V0.3" fill="none" stroke="#e4e6f0" stroke-width="1.5" stroke-linejoin="round"/></svg>
<div class="t th" style="left:31.3px;top:483px">音乐<span style="font-family:'Liberation Serif',serif;font-size:8.5px">1</span></div>
<svg style="left:3.5px;top:490.5px" width="11" height="9" viewBox="0 0 11 9"><path d="M5 1.4 L10.4 0.2 V6.6 H9.4 V2.4 L6 3.2 V7.6 H5 Z" fill="#d6d9e6"/><ellipse cx="4.4" cy="7.6" rx="1.7" ry="1.2" fill="#d6d9e6"/><ellipse cx="8.8" cy="6.6" rx="1.7" ry="1.2" fill="#d6d9e6"/><path d="M0.4 4.6 L1.2 4.2 V8.2" fill="none" stroke="#d6d9e6" stroke-width="0.9"/></svg>
<svg style="left:34.5px;top:495.0px" width="9" height="9" viewBox="0 0 9 9"><g transform="rotate(-45 4.5 4.5)" fill="none" stroke="#3a4464" stroke-width="1.2"><rect x="-0.6" y="2.9" width="5.4" height="3.2" rx="1.6"/><rect x="4.2" y="2.9" width="5.4" height="3.2" rx="1.6"/></g></svg>
<svg style="left:57.0px;top:496.0px" width="11.5" height="8" viewBox="0 0 11.5 8"><path d="M0 2.4 H2.4 L5.6 0 V8 L2.4 5.6 H0 Z" fill="#d6d9e6"/><path d="M7 2.4 Q8 4 7 5.6 M8.8 1.2 Q10.6 4 8.8 6.8" fill="none" stroke="#d6d9e6" stroke-width="1"/></svg>
<svg style="left:80.2px;top:498.2px" width="8.5" height="5" viewBox="0 0 8.5 5"><path d="M0.9 0.3 V1.4 Q2 4 4.25 4 Q6.5 4 7.6 1.4 V0.3" fill="none" stroke="#e4e6f0" stroke-width="1.5" stroke-linejoin="round"/></svg>
<div class="a" style="left:0;top:520px;width:1000px;height:1px;background:#141a28"></div>
<div class="a" style="left:18px;top:523.5px;width:14px;height:8px;background:#1b4a82;border-radius:1px"></div>
<div class="t" style="left:19.5px;top:525.5px;font-size:5px;font-weight:bold;color:#3aa8f6;letter-spacing:-0.2px">+/-T</div>
<svg style="left:42px;top:524.6px" width="3.6" height="6.2" viewBox="0 0 3.6 6.4"><path d="M3.6 0 V6.4 L0 3.2 Z" fill="#e4e6f0"/></svg>
<svg style="left:54px;top:524.6px" width="3.6" height="6.2" viewBox="0 0 3.6 6.4"><path d="M0 0 V6.4 L3.6 3.2 Z" fill="#e4e6f0"/></svg>
<div class="a" style="left:103.5px;top:525.8px;width:580px;height:4.4px;background:#2f3858"></div>

<div class="a" style="left:799px;top:479.5px;width:201px;height:56.5px;background:#fff"></div>
<svg style="left:799px;top:479.5px" width="201" height="56.5" viewBox="799 479.5 201 56.5">
<defs><linearGradient id="wg" x1="0" y1="0" x2="0" y2="1"><stop offset="0" stop-color="#c81a14"/><stop offset="0.55" stop-color="#e2401a"/><stop offset="1" stop-color="#f08a1e"/></linearGradient>
<radialGradient id="hg" cx="0.5" cy="0.4" r="0.7"><stop offset="0" stop-color="#a2d82a"/><stop offset="1" stop-color="#6cb410"/></radialGradient></defs>
<ellipse cx="840.5" cy="523.2" rx="30.5" ry="9.6" fill="url(#hg)" transform="rotate(-3 840.5 523.2)"/>
<path d="M826 492 L832 483 L848 488.5 L849.5 520.5 L825.5 521.5 Z" fill="#fef7dc"/>
<path d="M831.5 521.5 L842 521 Q840 527 842 533 L830.5 533.2 Q834 527 831.5 521.5 Z" fill="#efe3a4"/>
<path d="M831 520.8 V510 Q831 502.4 837 502.4 Q843 502.4 843 510 V520.8 Z" fill="#b8682a"/>
<path d="M834 504.5 V520.5 M837 503 V520.5 M840 504.5 V520.5" stroke="#d28a44" stroke-width="0.7"/>
<rect x="826.5" y="496" width="4" height="2.4" fill="#f2b866" transform="rotate(-20 828.5 497)"/>
<rect x="839.5" y="494" width="4.4" height="2.4" fill="#f2b866" transform="rotate(12 841.5 495)"/>
<path d="M849.5 505.5 L855.5 502 L857.5 505.5 V519.5 H849.5 Z" fill="#c2e8f4"/>
<rect x="851" y="512.5" width="4.6" height="7" fill="#6cb0e0"/>
<circle cx="853.8" cy="507.6" r="1.8" fill="#1e9ed8"/>
<path d="M849 505.4 L855.5 500.8 L861 506.6 Q863 508 864.4 506" fill="none" stroke="#d8a062" stroke-width="1.2"/>
<path d="M815 503.6 Q811.6 505.6 811.6 503 Q812 500.8 814.2 501.8 Q816 503 817.4 501 L832 481 L856 491.6 Q859.6 492.6 860 489.6 Q859.8 487.2 857.4 488" fill="none" stroke="#c82a20" stroke-width="1.4" stroke-linecap="round" stroke-linejoin="round"/>
<path d="M811 514.5 L815.4 522" stroke="#7a5a1e" stroke-width="1"/>
<path d="M819 515 L820.6 518.4" stroke="#7a5a1e" stroke-width="0.7"/>
<ellipse cx="808.8" cy="511.8" rx="5.4" ry="5.6" fill="#4e9c16"/>
<circle cx="818.4" cy="513.2" r="2.3" fill="#5aa81a"/>
<text x="872.5" y="508" font-family="'Liberation Sans','Noto Sans CJK SC',sans-serif" font-weight="900" font-size="22.5" fill="url(#wg)" textLength="122.5" lengthAdjust="spacing">源码搜藏网</text>
<text x="883.5" y="523.6" font-family="'Liberation Sans',sans-serif" font-weight="bold" font-size="15" fill="#6e6e6e" textLength="112" lengthAdjust="spacingAndGlyphs">codesocang.com</text>
</svg>

</div>
</body>
</html>
